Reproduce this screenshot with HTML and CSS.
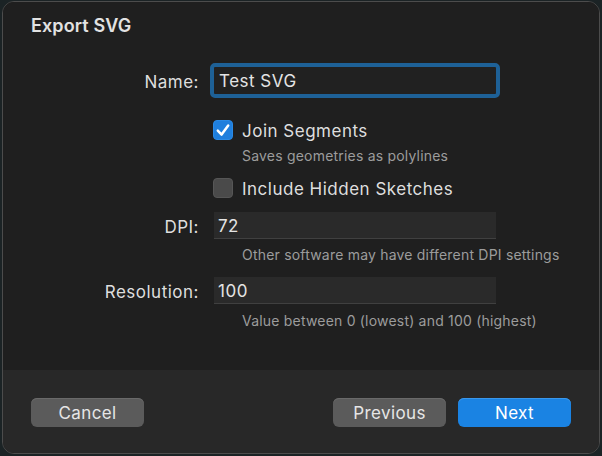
FILE: index.html
```html
<!DOCTYPE html>
<html>
<head>
<meta charset="utf-8">
<link rel="stylesheet" href="styles.css">
</head>
<body>
<div class="window">
  <div class="main">
    <h1 class="title">Export SVG</h1>
    <div class="row row-name">
      <label class="label">Name:</label>
      <div class="ring"><div class="field field-focus">Test SVG</div></div>
    </div>
    <div class="row row-check1">
      <span></span>
      <div class="check-line">
        <span class="box box-on"><svg viewBox="0 0 20 20" width="20" height="20"><path d="M4.8 10.6 L8.6 14.6 L15.2 5.6" fill="none" stroke="#fff" stroke-width="2.5" stroke-linecap="round" stroke-linejoin="round"/></svg></span>
        <span class="check-text">Join Segments</span>
      </div>
    </div>
    <div class="row row-help1">
      <span></span>
      <div class="help">Saves geometries as polylines</div>
    </div>
    <div class="row row-check2">
      <span></span>
      <div class="check-line">
        <span class="box"></span>
        <span class="check-text">Include Hidden Sketches</span>
      </div>
    </div>
    <div class="row row-dpi">
      <label class="label">DPI:</label>
      <div class="field">72</div>
    </div>
    <div class="row row-help2">
      <span></span>
      <div class="help">Other software may have different DPI settings</div>
    </div>
    <div class="row row-res">
      <label class="label">Resolution:</label>
      <div class="field">100</div>
    </div>
    <div class="row row-help3">
      <span></span>
      <div class="help">Value between 0 (lowest) and 100 (highest)</div>
    </div>
  </div>
  <div class="footer">
    <button class="btn">Cancel</button>
    <div class="right">
      <button class="btn">Previous</button>
      <button class="btn btn-primary">Next</button>
    </div>
  </div>
</div>
</body>
</html>
```

FILE: styles.css
```css
* { box-sizing: border-box; }
html, body { margin: 0; padding: 0; }
body {
  background: #1b2325;
  width: 602px;
  height: 456px;
  font-family: Inter, "Liberation Sans", Arial, sans-serif;
  color: #dedede;
  padding: 1px 2px 0 2px;
}
.window {
  width: 598px;
  height: 453px;
  border: 1px solid #4c4c4c;
  border-radius: 12px;
  overflow: hidden;
  display: flex;
  flex-direction: column;
  background: #1f1f1f;
}
.main {
  height: 368px;
  background: #1f1f1f;
}
.title {
  margin: 0;
  padding: 13px 0 0 28px;
  font-size: 18px;
  line-height: 22px;
  font-weight: 600;
  color: #e2e2e2;
  letter-spacing: 0.1px;
}
.row {
  display: grid;
  grid-template-columns: 196px 1fr;
  column-gap: 11px;
  align-items: center;
}
.label {
  text-align: right;
  font-size: 17px;
  letter-spacing: 0.5px;
  color: #dedede;
  padding-top: 3px;
}
.row-name { margin-top: 26px; height: 35px; }
.ring {
  width: 290px;
  height: 35px;
  border: 3px solid #1e6197;
  border-radius: 5px;
  padding: 1px;
  background: #1e6197;
}
.field {
  height: 27px;
  width: 282px;
  margin-left: 4px;
  background: #2a2a2a;
  border-bottom: 1px solid #404040;
  font-size: 17px;
  letter-spacing: 0.5px;
  line-height: 24px;
  padding-top: 2px;
  padding-left: 4px;
  color: #e4e4e4;
}
.field-focus {
  margin-left: 0;
  width: 282px;
  height: 27px;
  background: #212121;
  border: none;
  line-height: 25px;
  padding-top: 2px;
  padding-left: 5px;
  border-radius: 1px;
}
.row-check1 { margin-top: 18px; height: 28px; }
.check-line {
  display: flex;
  align-items: center;
  padding-left: 3px;
}
.box {
  width: 20px;
  height: 20px;
  border-radius: 4px;
  background: #4a4a4a;
  border: 1px solid #565656;
  display: inline-flex;
}
.box svg { margin: -1px; }
.box-on {
  background: #1f7fdd;
  border-color: #2a8ae6;
}
.check-text {
  margin-left: 9px;
  font-size: 17px;
  letter-spacing: 0.5px;
  color: #dedede;
  padding-top: 2px;
}
.help {
  padding-left: 32px;
  font-size: 14px;
  line-height: 16px;
  color: #9c9c9c;
  letter-spacing: 0.2px;
}
.row-help1 { margin-top: 4px; }
.row-check2 { margin-top: 10px; height: 28px; }
.row-dpi { margin-top: 10px; height: 27px; }
.row-dpi .field, .row-res .field { margin-left: 4px; }
.row-help2 { margin-top: 8px; }
.row-res { margin-top: 14px; height: 27px; }
.row-help3 { margin-top: 9px; }
.footer {
  flex: 1;
  background: #282828;
  display: flex;
  justify-content: space-between;
  align-items: flex-start;
  padding: 28px 28px 0 28px;
}
.right { display: flex; gap: 12px; }
.btn {
  width: 113px;
  height: 29px;
  border: none;
  border-radius: 6px;
  background: #5b5b5b;
  box-shadow: inset 0 1px 0 #6a6a6a;
  color: #e6e6e6;
  font-family: Inter, "Liberation Sans", Arial, sans-serif;
  font-size: 17px;
  letter-spacing: 0.4px;
  padding: 0;
}
.btn-primary {
  background: #1a83e3;
  box-shadow: inset 0 1px 0 #3a98ec;
  color: #ffffff;
}
```
